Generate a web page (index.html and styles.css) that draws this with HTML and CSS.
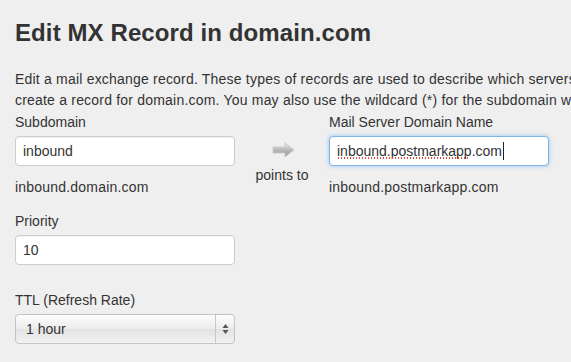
FILE: index.html
```html
<!DOCTYPE html>
<html lang="en">
<head>
    <meta charset="UTF-8">
    <title>Edit MX Record</title>
    <link rel="stylesheet" href="styles.css">
</head>
<body>
    <div class="page">
        <h1>Edit MX Record in domain.com</h1>
        <p class="intro">Edit a mail exchange record. These types of records are used to describe which servers handle mail for a domain. You can<br>create a record for domain.com. You may also use the wildcard (*) for the subdomain when needed.</p>

        <div class="record-row">
            <div class="field-col">
                <label for="subdomain">Subdomain</label>
                <input type="text" id="subdomain" value="inbound">
                <div class="preview">inbound.domain.com</div>
            </div>

            <div class="points-to">
                <svg class="arrow" width="24" height="16" viewBox="0 0 24 16">
                    <defs>
                        <linearGradient id="arrowFill" x1="0" y1="0" x2="0" y2="1">
                            <stop offset="0" stop-color="#e8e8e8"/>
                            <stop offset="0.5" stop-color="#b8b8b8"/>
                            <stop offset="1" stop-color="#9a9a9a"/>
                        </linearGradient>
                    </defs>
                    <path d="M1 5 H13 V1 L22 8 L13 15 V11 H1 Z" fill="url(#arrowFill)" stroke="#c8c8c8" stroke-width="0.8"/>
                </svg>
                <span>points to</span>
            </div>

            <div class="field-col">
                <label for="mailserver">Mail Server Domain Name</label>
                <div class="input-wrap">
                    <input type="text" id="mailserver" class="focused" value="inbound.postmarkapp.com">
                    <span class="spell-mark"></span>
                    <span class="caret"></span>
                </div>
                <div class="preview">inbound.postmarkapp.com</div>
            </div>
        </div>

        <div class="field-col">
            <label for="priority">Priority</label>
            <input type="text" id="priority" value="10">
        </div>

        <div class="field-col ttl">
            <label for="ttl">TTL (Refresh Rate)</label>
            <div class="select-box">
                <span>1 hour</span>
                <div class="select-arrows">
                    <svg width="7" height="12" viewBox="0 0 7 12">
                        <path d="M3.5 1 L6.5 5 H0.5 Z" fill="#555"/>
                        <path d="M3.5 11 L6.5 7 H0.5 Z" fill="#555"/>
                    </svg>
                </div>
            </div>
        </div>
    </div>
</body>
</html>
```

FILE: styles.css
```css
/* Global Styles */
body {
    margin: 0;
    padding: 0;
    background-color: #efefef;
    font-family: "Liberation Sans", Arial, sans-serif;
    color: #333;
    overflow: hidden;
}

.page {
    padding: 17px 15px 0 15px;
    width: 700px;
}

h1 {
    font-size: 24px;
    font-weight: bold;
    line-height: 32px;
    margin: 0 0 20px 0;
    color: #333;
    letter-spacing: 0.1px;
}

.intro {
    font-size: 14px;
    line-height: 21px;
    margin: 0 0 1px 0;
    white-space: nowrap;
    letter-spacing: 0.2px;
}

/* Form rows */
.record-row {
    display: flex;
}

.field-col {
    display: flex;
    flex-direction: column;
    width: 220px;
}

label {
    font-size: 14px;
    line-height: 20px;
    margin-bottom: 4px;
}

input {
    box-sizing: border-box;
    width: 220px;
    height: 30px;
    padding: 4px 7px;
    font-family: "Liberation Sans", Arial, sans-serif;
    font-size: 14px;
    color: #333;
    background-color: #fff;
    border: 1px solid #ccc;
    border-radius: 4px;
    box-shadow: inset 0 1px 1px rgba(0, 0, 0, 0.06);
    outline: none;
}

input.focused {
    border-color: #7fb2e6;
    box-shadow: 0 0 4px rgba(82, 168, 236, 0.6);
}

.input-wrap {
    position: relative;
    height: 30px;
}

/* red spell-check dots under the typed host */
.spell-mark {
    position: absolute;
    left: 8px;
    top: 21px;
    width: 133px;
    height: 2px;
    background-image: radial-gradient(circle, #e0463a 0.7px, transparent 1.1px);
    background-size: 3px 2px;
    background-repeat: repeat-x;
}

.caret {
    position: absolute;
    left: 174px;
    top: 6px;
    width: 1px;
    height: 18px;
    background-color: #222;
}

.preview {
    font-size: 14px;
    line-height: 20px;
    margin-top: 11px;
    margin-bottom: 14px;
    letter-spacing: 0.2px;
}

/* Arrow between columns */
.points-to {
    width: 94px;
    display: flex;
    flex-direction: column;
    align-items: center;
    padding-top: 30px;
    font-size: 14px;
}

.points-to .arrow {
    margin-left: 4px;
    margin-bottom: 9px;
}

/* TTL select */
.ttl {
    margin-top: 25px;
}

.select-box {
    box-sizing: border-box;
    width: 220px;
    height: 30px;
    display: flex;
    align-items: center;
    border: 1px solid #c4c4c4;
    border-radius: 4px;
    background: linear-gradient(#fdfdfd, #ececec 50%, #e2e2e2 51%, #f2f2f2);
    font-size: 14px;
}

.select-box span {
    flex: 1;
    padding-left: 10px;
}

.select-arrows {
    width: 18px;
    height: 100%;
    border-left: 1px solid #c8c8c8;
    display: flex;
    align-items: center;
    justify-content: center;
}
```
